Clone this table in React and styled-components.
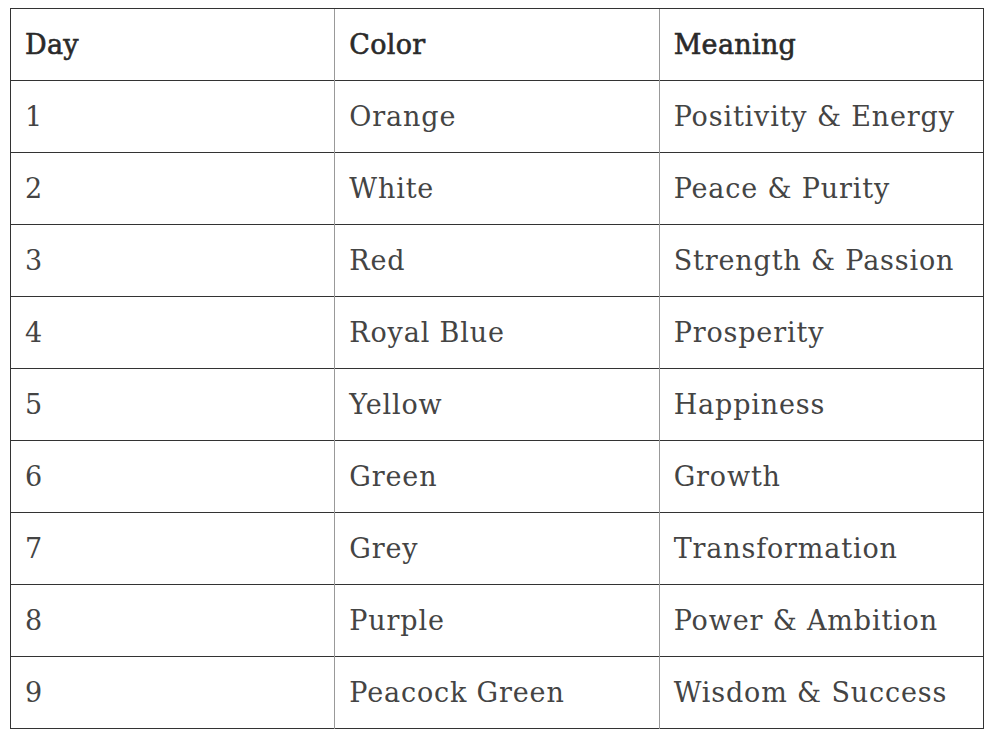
import React from "react";
import styled, { createGlobalStyle } from "styled-components";

const rows = [
	["1", "Orange", "Positivity & Energy"],
	["2", "White", "Peace & Purity"],
	["3", "Red", "Strength & Passion"],
	["4", "Royal Blue", "Prosperity"],
	["5", "Yellow", "Happiness"],
	["6", "Green", "Growth"],
	["7", "Grey", "Transformation"],
	["8", "Purple", "Power & Ambition"],
	["9", "Peacock Green", "Wisdom & Success"],
];

const GlobalStyle = createGlobalStyle`
	body {
		margin: 0;
		background: #fff;
		font-family: "DejaVu Serif", "Liberation Serif", serif;
	}
`;

const Page = styled.div`
	padding: 8px 0 0 10px;
`;

const Table = styled.table`
	border-collapse: collapse;
	width: 974px;
	table-layout: fixed;
	border: 1px solid #333;
`;

const Cell = styled.td`
	height: 71px;
	padding: 0 0 0 14px;
	text-align: left;
	vertical-align: middle;
	border-top: 1px solid #333;
	border-left: 1px solid #999;
	color: ${(p) => (p.$head ? "#2a2a2a" : "#444")};
	font-size: 27px;
	font-weight: 400;
	-webkit-text-stroke: ${(p) => (p.$head ? "0.6px #2a2a2a" : "0")};
	letter-spacing: ${(p) => (p.$head ? "0.3px" : "0.85px")};
	white-space: nowrap;

	&:first-child {
		border-left: 1px solid #333;
	}
`;

export default function App() {
	return (
		<Page>
			<GlobalStyle />
			<Table>
				<thead>
					<tr>
						<Cell as="th" $head>Day</Cell>
						<Cell as="th" $head>Color</Cell>
						<Cell as="th" $head>Meaning</Cell>
					</tr>
				</thead>
				<tbody>
					{rows.map((r) => (
						<tr key={r[0]}>
							{r.map((v) => (
								<Cell key={v}>{v}</Cell>
							))}
						</tr>
					))}
				</tbody>
			</Table>
		</Page>
	);
}
